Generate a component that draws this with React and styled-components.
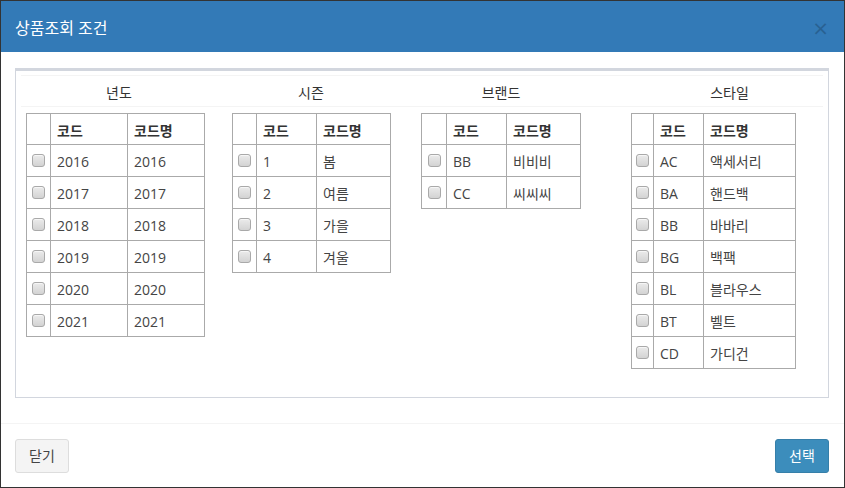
import React from "react";
import styled, { createGlobalStyle } from "styled-components";

const Global = createGlobalStyle`
  html, body { margin: 0; padding: 0; background: #fff; }
  * { box-sizing: border-box; }
  body { font-family: "Open Sans", "Noto Sans CJK KR", sans-serif; color: #333; }
`;

const Modal = styled.div`
  width: 845px;
  height: 488px;
  border: 1px solid #333;
  display: flex;
  flex-direction: column;
  background: #fff;
`;

const Header = styled.div`
  height: 51px;
  flex: none;
  background: #337ab7;
  display: flex;
  align-items: center;
  justify-content: space-between;
  padding: 3px 15px 0 14px;
`;

const Title = styled.h4`
  margin: 0;
  font-size: 16px;
  font-weight: 400;
  color: #fff;
  line-height: 20px;
`;

const Close = styled.button`
  border: 0;
  background: none;
  padding: 0;
  font-family: "DejaVu Sans", sans-serif;
  font-size: 20px;
  font-weight: 400;
  line-height: 1;
  color: #000;
  opacity: 0.2;
  cursor: pointer;
`;

const Body = styled.div`
  padding: 16px 15px 25px 14px;
  flex: none;
`;

const Box = styled.div`
  height: 330px;
  border: 1px solid #d2d6de;
  border-top-width: 3px;
  padding: 4px 5px;
`;

const Grid = styled.div`
  display: grid;
  grid-template-columns: 196px 188px 192px 1fr;
`;

const Heading = styled.div`
  height: 32px;
  border-top: 1px solid #f4f4f4;
  border-bottom: 1px solid #f4f4f4;
  display: flex;
  align-items: center;
  justify-content: center;
  padding-top: 3px;
  padding-left: ${(p) => p.$shift || 0}px;
  font-size: 14px;
  line-height: 20px;
  color: #333;
`;

const Cell = styled.div`
  padding: 6px 0 0 ${(p) => p.$offset}px;
`;

const Table = styled.table`
  border-collapse: collapse;
  table-layout: fixed;
  font-size: 14px;
  color: #444;
`;

const Th = styled.th`
  border: 1px solid #aaa;
  height: 31px;
  padding: 1px 0 0 6px;
  text-align: left;
  font-weight: 700;
  color: #333;
  vertical-align: middle;
`;

const Td = styled.td`
  border: 1px solid #aaa;
  height: 32px;
  padding: 1px 0 0 6px;
  vertical-align: middle;
  white-space: nowrap;
`;

const CheckTd = styled(Td)`
  padding: 0;
  text-align: center;
`;

const Check = styled.input.attrs({ type: "checkbox" })`
  appearance: none;
  -webkit-appearance: none;
  width: 13px;
  height: 13px;
  margin: 3px 0 0 0;
  border: 1px solid #a9a9a9;
  border-radius: 3px;
  background: linear-gradient(#ebebeb, #d3d3d3);
  box-shadow: inset 0 1px 0 #f6f6f6;
  display: inline-block;
  vertical-align: top;
`;

const Footer = styled.div`
  border-top: 1px solid #f4f4f4;
  padding: 15px 15px 0 14px;
  display: flex;
  justify-content: space-between;
`;

const Button = styled.button`
  width: 54px;
  height: 34px;
  border-radius: 3px;
  font-family: "Open Sans", "Noto Sans CJK KR", sans-serif;
  font-size: 14px;
  line-height: 20px;
  padding: 0;
  cursor: pointer;
  border: 1px solid ${(p) => (p.$primary ? "#367fa9" : "#ddd")};
  background: ${(p) => (p.$primary ? "#3c8dbc" : "#f4f4f4")};
  color: ${(p) => (p.$primary ? "#fff" : "#444")};
`;

const groups = [
  {
    title: "년도",
    offset: 5,
    widths: [24, 77, 77],
    rows: [
      ["2016", "2016"],
      ["2017", "2017"],
      ["2018", "2018"],
      ["2019", "2019"],
      ["2020", "2020"],
      ["2021", "2021"],
    ],
  },
  {
    title: "시즌",
    offset: 15,
    widths: [24, 60, 74],
    rows: [
      ["1", "봄"],
      ["2", "여름"],
      ["3", "가을"],
      ["4", "겨울"],
    ],
  },
  {
    title: "브랜드",
    offset: 16,
    widths: [25, 60, 74],
    rows: [
      ["BB", "비비비"],
      ["CC", "씨씨씨"],
    ],
  },
  {
    title: "스타일",
    offset: 34,
    shift: 39,
    widths: [22, 50, 92],
    rows: [
      ["AC", "액세서리"],
      ["BA", "핸드백"],
      ["BB", "바바리"],
      ["BG", "백팩"],
      ["BL", "블라우스"],
      ["BT", "벨트"],
      ["CD", "가디건"],
    ],
  },
];

function CodeTable({ widths, rows }) {
  const total = widths.reduce((a, b) => a + b, 0) + 1;
  return (
    <Table style={{ width: total }}>
      <colgroup>
        {widths.map((w, i) => (
          <col key={i} style={{ width: w }} />
        ))}
      </colgroup>
      <thead>
        <tr>
          <Th />
          <Th>코드</Th>
          <Th>코드명</Th>
        </tr>
      </thead>
      <tbody>
        {rows.map(([code, name]) => (
          <tr key={code}>
            <CheckTd>
              <Check />
            </CheckTd>
            <Td>{code}</Td>
            <Td>{name}</Td>
          </tr>
        ))}
      </tbody>
    </Table>
  );
}

export default function App() {
  return (
    <>
      <Global />
      <Modal>
        <Header>
          <Title>상품조회 조건</Title>
          <Close aria-label="닫기">×</Close>
        </Header>
        <Body>
          <Box>
            <Grid>
              {groups.map((g) => (
                <Heading key={g.title} $shift={g.shift}>
                  {g.title}
                </Heading>
              ))}
              {groups.map((g) => (
                <Cell key={g.title} $offset={g.offset}>
                  <CodeTable widths={g.widths} rows={g.rows} />
                </Cell>
              ))}
            </Grid>
          </Box>
        </Body>
        <Footer>
          <Button>닫기</Button>
          <Button $primary>선택</Button>
        </Footer>
      </Modal>
    </>
  );
}
